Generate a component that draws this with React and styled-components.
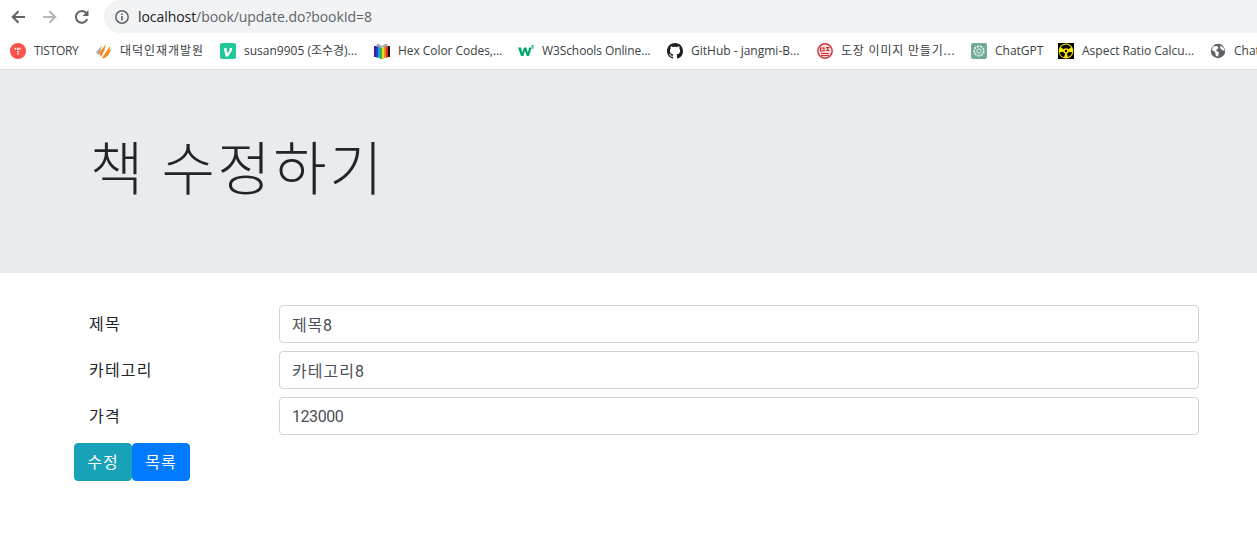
import React from 'react';
import styled, { createGlobalStyle } from 'styled-components';

const Global = createGlobalStyle`
  html, body { margin: 0; padding: 0; background: #fff; overflow: hidden; }
  body { font-family: "Open Sans", "Noto Sans CJK KR", sans-serif; }
  * { box-sizing: border-box; }
`;
const Page = styled.div`width: 1257px; height: 535px; overflow: hidden; background: #fff;`;
const Toolbar = styled.div`height: 33px; display: flex; align-items: center; background: #fff;`;
const NavButtons = styled.div`display: flex; align-items: center; gap: 14px; padding-left: 9px; width: 104px; flex: none;`;
const NavIcon = styled.svg`width: 18px; height: 18px; flex: none; display: block;`;
const InfoIcon = styled.svg`width: 16px; height: 16px; flex: none; display: block;`;
const Omnibox = styled.div`
  flex: 1; height: 33px; background: #f1f3f4; border-radius: 17px 0 0 17px;
  display: flex; align-items: center; padding-left: 10px; gap: 8px;
  margin-right: -1px;
`;
const Url = styled.div`font: 14px/18px "Open Sans", sans-serif; letter-spacing: -0.06px; color: #5f6368; white-space: nowrap; span { color: #202124; }`;
const Bookmarks = styled.div`
  height: 37px; display: flex; align-items: center; background: #fff;
  border-bottom: 1px solid #dadce0; padding-left: 10px; overflow: hidden;
`;
const Bookmark = styled.div`
  display: flex; align-items: center; gap: 8px; flex: none; width: ${p => p.$w}px;
  font: 12px/16px "Open Sans", "Noto Sans CJK KR", sans-serif; color: #3c4043; white-space: nowrap;
  letter-spacing: ${p => p.$ls}px;
`;
const Favicon = styled.svg`width: 16px; height: 16px; flex: none; display: block;`;
const Jumbotron = styled.div`height: 203px; background: #e9ecef; display: flex; align-items: center; padding: 0 0 12px 90px;`;
const Title = styled.h1`
  margin: 0; font: 300 58px/67px "Noto Sans CJK KR", sans-serif; color: #212529; letter-spacing: 2.6px;
`;
const Form = styled.form`padding: 32px 58px 0 74px; display: flex; flex-direction: column; gap: 8px;`;
const Row = styled.div`display: flex; align-items: center; height: 38px;`;
const Label = styled.label`
  width: 205px; padding: 0 0 2px 15px; flex: none; letter-spacing: 1.2px;
  font: 16px/24px "Noto Sans CJK KR", sans-serif; color: #212529;
`;
const Input = styled.input`
  flex: 1; height: 38px; border: 1px solid #ced4da; border-radius: 4px; padding: 6px 12px;
  font: 16px/24px "Roboto", "Noto Sans CJK KR", sans-serif; color: #495057; background: #fff; outline: none;
  letter-spacing: ${p => p.$ls}px;
`;
const Buttons = styled.div`display: flex;`;
const Button = styled.button`
  width: 58px; height: 38px; border: 1px solid ${p => p.$bg}; background: ${p => p.$bg}; color: #fff;
  border-radius: 4px; padding: 0 0 2px; letter-spacing: 1px; font: 16px/24px "Noto Sans CJK KR", sans-serif;
`;

const Back = ({ color }) => (
  <NavIcon viewBox="0 0 18 18"><path d="M16 9H4M9.5 3.2 3.7 9l5.8 5.8" fill="none" stroke={color} strokeWidth="2" /></NavIcon>
);
const Forward = ({ color }) => (
  <NavIcon viewBox="0 0 18 18"><path d="M2 9h12M8.5 3.2 14.3 9l-5.8 5.8" fill="none" stroke={color} strokeWidth="2" /></NavIcon>
);
const Reload = () => (
  <NavIcon viewBox="0 0 18 18">
    <path d="M14.2 11.2A5.9 5.9 0 1 1 13.2 4.9" fill="none" stroke="#5f6368" strokeWidth="2" />
    <path d="M15.5 2v6h-6z" fill="#5f6368" />
  </NavIcon>
);
const Info = () => (
  <InfoIcon viewBox="0 0 16 16">
    <circle cx="8" cy="8" r="6.2" fill="none" stroke="#5f6368" strokeWidth="1.5" />
    <path d="M7.2 7h1.6v4.6H7.2zM7.2 4.4h1.6V6H7.2z" fill="#5f6368" />
  </InfoIcon>
);

const icons = {
  tistory: <><circle cx="8" cy="8" r="8" fill="#f9534a" /><path d="M4.6 5.6h6.8M8 5.600v6" stroke="#fff" strokeWidth="1.6" strokeDasharray="1.5 .8" /></>,
  daedeok: <>
    <path d="M0 9 6 2.500 4.500 8 2.500 12.500z" fill="#b3b0ac" />
    <path d="M3 10 10 1 8.500 7 5 14z" fill="#f28a20" />
    <path d="M6 15 14 3 13.500 8 16 5.500 12 12.500 8 15.500z" fill="#f28a20" />
  </>,
  vue: <><rect width="16" height="16" rx="2" fill="#20c997" /><path d="M3.800 5.200 6.400 4.900 7.600 10.400c1-1.600 2.100-3 2.100-4-.1-.5-.3-.7-.3-1.200.3-.5 2.400-.8 2.800.2.300 1.800-2.700 6-4.400 8H5.600z" fill="#fff" /></>,
  hex: <>
    <path d="M2 4.500 3 0.500 7.500 2.500 8 4.500zM8 4.500 8.500 2.500 13 0.500 14 4.500z" fill="#a3a3a3" />
    <rect x="0" y="3" width="2" height="11" fill="#3a1fa8" />
    <rect x="2" y="3.500" width="2" height="11" fill="#1f3fd0" />
    <rect x="4" y="4" width="2" height="11" fill="#1fa0c8" />
    <rect x="6" y="4.500" width="2" height="11.500" fill="#32b848" />
    <rect x="8" y="4.500" width="2" height="11.500" fill="#e8d820" />
    <rect x="10" y="4" width="2" height="11" fill="#f08a1e" />
    <rect x="12" y="3.500" width="2" height="11" fill="#e02828" />
    <rect x="14" y="3" width="2" height="11" fill="#221010" />
  </>,
  w3: <><path d="M0 4.500h3l1.300 5L6 4.500h2.300l1.600 5 1.300-5h2.600L11 13H8.700L7 8l-1.600 5H3z" fill="#04aa6d" /><path d="M13.500 2h2v.8l-.8 1h.8v1.800h-2v-.8h1.200v-.5h-1v-.7l.8-.9h-1z" fill="#04aa6d" /></>,
  github: <path d="M8 0C3.58 0 0 3.58 0 8c0 3.54 2.29 6.53 5.47 7.59.4.07.55-.17.55-.38 0-.19-.01-.82-.01-1.49-2.01.37-2.53-.49-2.69-.94-.09-.23-.48-.94-.82-1.13-.28-.15-.68-.52-.01-.53.63-.01 1.08.58 1.23.82.72 1.21 1.87.87 2.33.66.07-.52.28-.87.51-1.07-1.78-.2-3.64-.89-3.64-3.95 0-.87.31-1.59.82-2.15-.08-.2-.36-1.02.08-2.12 0 0 .67-.21 2.2.82.64-.18 1.32-.27 2-.27s1.36.09 2 .27c1.53-1.04 2.2-.82 2.2-.82.44 1.1.16 1.92.08 2.12.51.56.82 1.27.82 2.15 0 3.07-1.87 3.75-3.65 3.95.29.25.54.73.54 1.48 0 1.07-.01 1.93-.01 2.2 0 .21.15.46.55.38A8.01 8.01 0 0 0 16 8c0-4.42-3.58-8-8-8z" fill="#1b1f23" />,
  stamp: <><circle cx="8" cy="8" r="7.200" fill="#f6dcdc" stroke="#cf3038" strokeWidth="1.400" /><path d="M3.500 5h3.500v3H3.500zM9 4.500h3.500M10.700 4.500V8M9 7.500h3.500M4 10.500h8M4 12.500h8" stroke="#cf3038" strokeWidth="1.200" fill="none" /></>,
  gpt: <><rect width="16" height="16" rx="2" fill="#74aa9c" /><circle cx="8" cy="8" r="4.800" fill="none" stroke="#e8f2ef" strokeWidth="1.500" strokeDasharray="2.500 .8" /><circle cx="8" cy="8" r="2.200" fill="none" stroke="#e8f2ef" strokeWidth="1" /></>,
  aspect: <>
    <rect width="16" height="16" fill="#000" />
    <circle cx="8" cy="8" r="7.400" fill="#f7e600" />
    <path d="M8 8 2.800 4.200A6.500 6.500 0 0 1 13.200 4.200zM8 8 14.300 9.600A6.500 6.500 0 0 1 10 14.200zM8 8 6 14.200A6.500 6.500 0 0 1 1.700 9.600z" fill="#000" />
    <circle cx="8" cy="8" r="2.800" fill="#f7e600" /><circle cx="8" cy="8" r="1.200" fill="#000" />
  </>,
  globe: <><circle cx="8" cy="8" r="7.200" fill="#5f6368" /><path d="M3 3.500 7 3l1.500 2L6 7.500l3 2-1 4-2-.5-1-4L2 7zM10.500 2.500 14 5l.5 3-2.500-1-2-2z" fill="#fff" /></>,
};

const bookmarks = [
  ['tistory', 'TISTORY', 86, -0.3],
  ['daedeok', '대덕인재개발원', 124, 0.95],
  ['vue', 'susan9905 (조수경)...', 154, 0],
  ['hex', 'Hex Color Codes,...', 144, -0.05],
  ['w3', 'W3Schools Online...', 149, -0.1],
  ['github', 'GitHub - jangmi-B...', 150, 0],
  ['stamp', '도장 이미지 만들기...', 154, 0.8],
  ['gpt', 'ChatGPT', 87, 0],
  ['aspect', 'Aspect Ratio Calcu...', 152, 0],
  ['globe', 'ChatGPT', 100, 0],
];

export default function App() {
  return (
    <Page>
      <Global />
      <Toolbar>
        <NavButtons>
          <Back color="#5f6368" />
          <Forward color="#b5b7ba" />
          <Reload />
        </NavButtons>
        <Omnibox>
          <Info />
          <Url><span>localhost</span>/book/update.do?bookId=8</Url>
        </Omnibox>
      </Toolbar>
      <Bookmarks>
        {bookmarks.map(([k, t, w, ls]) => (
          <Bookmark key={k} $w={w} $ls={ls}>
            <Favicon viewBox="0 0 16 16">{icons[k]}</Favicon>
            {t}
          </Bookmark>
        ))}
      </Bookmarks>
      <Jumbotron>
        <Title>책 수정하기</Title>
      </Jumbotron>
      <Form onSubmit={e => e.preventDefault()}>
        <Row><Label>제목</Label><Input $ls={0.8} defaultValue="제목8" /></Row>
        <Row><Label>카테고리</Label><Input $ls={1} defaultValue="카테고리8" /></Row>
        <Row><Label>가격</Label><Input $ls={-0.45} defaultValue="123000" /></Row>
        <Buttons>
          <Button $bg="#17a2b8">수정</Button>
          <Button $bg="#007bff">목록</Button>
        </Buttons>
      </Form>
    </Page>
  );
}
